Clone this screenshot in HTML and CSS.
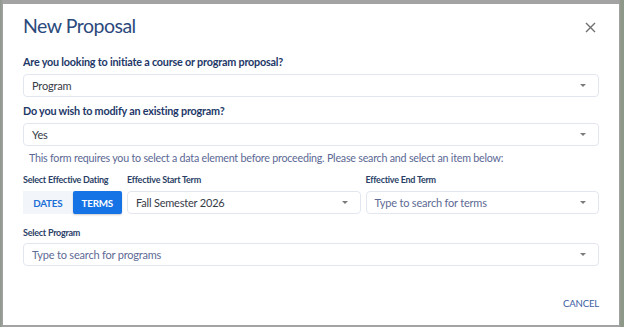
FILE: index.html
```html
<!DOCTYPE html>
<html lang="en">
<head>
    <meta charset="UTF-8">
    <meta name="viewport" content="width=device-width, initial-scale=1.0">
    <title>New Proposal</title>
    <link rel="stylesheet" href="styles.css">
</head>
<body>

    <div class="overlay">
        <div class="dialog">
            <div class="dialog-header">
                <h1>New Proposal</h1>
                <button class="close-btn" title="Close">
                    <svg width="11" height="11" viewBox="0 0 11 11">
                        <path d="M1 1L10 10M10 1L1 10" stroke="#6f6f6f" stroke-width="1.4" fill="none"/>
                    </svg>
                </button>
            </div>

            <label class="question">Are you looking to initiate a course or program proposal?</label>
            <div class="select">
                <span class="value">Program</span>
                <span class="arrow"></span>
            </div>

            <label class="question q-second">Do you wish to modify an existing program?</label>
            <div class="select">
                <span class="value">Yes</span>
                <span class="arrow"></span>
            </div>

            <p class="info">This form requires you to select a data element before proceeding. Please search and select an item below:</p>

            <div class="dating-row">
                <div class="field">
                    <label class="small-label">Select Effective Dating</label>
                    <div class="toggle">
                        <button class="toggle-btn">DATES</button>
                        <button class="toggle-btn active">TERMS</button>
                    </div>
                </div>
                <div class="field">
                    <label class="small-label">Effective Start Term</label>
                    <div class="select">
                        <span class="value">Fall Semester 2026</span>
                        <span class="arrow"></span>
                    </div>
                </div>
                <div class="field">
                    <label class="small-label">Effective End Term</label>
                    <div class="select">
                        <span class="value placeholder">Type to search for terms</span>
                        <span class="arrow"></span>
                    </div>
                </div>
            </div>

            <div class="field program-field">
                <label class="small-label">Select Program</label>
                <div class="select">
                    <span class="value placeholder">Type to search for programs</span>
                    <span class="arrow"></span>
                </div>
            </div>

            <div class="dialog-actions">
                <button class="text-btn">CANCEL</button>
            </div>
        </div>
    </div>

</body>
</html>
```

FILE: styles.css
```css
body {
    margin: 0;
    padding: 0;
    font-family: 'Lato', 'Liberation Sans', sans-serif;
    background-color: #9a9a9a;
}

.overlay {
    width: 624px;
    height: 327px;
    box-sizing: border-box;
    padding: 4px 5px 2px 3px;
    background: linear-gradient(to right, #8f978c 0px, #a3a3a3 3px, #a3a3a3 619px, #8d9889 621px);
}

.dialog {
    background: #ffffff;
    height: 321px;
    box-sizing: border-box;
    padding: 10px 20px 0 20px;
    display: flex;
    flex-direction: column;
}

.dialog-header {
    display: flex;
    justify-content: space-between;
    align-items: flex-start;
    height: 24px;
}

h1 {
    margin: 0;
    font-size: 19.5px;
    line-height: 24px;
    font-weight: 400;
    letter-spacing: -0.5px;
    color: #2b4a7c;
}

.close-btn {
    background: none;
    border: none;
    padding: 0;
    margin: 8px 3px 0 0;
    width: 11px;
    height: 11px;
    display: flex;
    cursor: pointer;
}

.question {
    display: block;
    margin-top: 17px;
    font-size: 10.8px;
    line-height: 14px;
    font-weight: 700;
    letter-spacing: -0.2px;
    color: #1e3868;
}

.q-second {
    margin-top: 7px;
}

.select {
    margin-top: 5px;
    height: 23px;
    box-sizing: border-box;
    border: 1px solid #e2e7ef;
    border-radius: 4px;
    display: flex;
    align-items: center;
    justify-content: space-between;
    padding: 0 12px 0 8px;
}

.value {
    font-size: 11px;
    letter-spacing: -0.2px;
    color: #363b47;
}

.placeholder {
    color: #5d6a94;
}

.arrow {
    width: 0;
    height: 0;
    border-left: 3.5px solid transparent;
    border-right: 3.5px solid transparent;
    border-top: 3.5px solid #7a7a7a;
}

.info {
    margin: 5px 0 0 6px;
    font-size: 10.7px;
    line-height: 14px;
    letter-spacing: -0.22px;
    color: #5b6894;
}

.dating-row {
    margin-top: 9px;
    display: grid;
    grid-template-columns: 99px 1fr 1fr;
    column-gap: 5px;
}

.small-label {
    display: block;
    font-size: 9px;
    line-height: 12px;
    font-weight: 700;
    color: #2b3f66;
    letter-spacing: -0.25px;
}

.field .select {
    margin-top: 5px;
}

.toggle {
    margin-top: 5px;
    display: flex;
    height: 23px;
}

.toggle-btn {
    flex: 1;
    border: none;
    background: #f2f6fb;
    color: #1c6fd6;
    font-family: inherit;
    font-size: 9.8px;
    font-weight: 700;
    letter-spacing: -0.2px;
    padding: 0;
    cursor: pointer;
}

.toggle-btn.active {
    background: #1673e6;
    color: #ffffff;
    border-radius: 2px;
    box-shadow: 0 1px 2px rgba(0, 0, 0, 0.2);
}

.program-field {
    margin-top: 13px;
}

.program-field .select {
    margin-top: 4px;
}

.dialog-actions {
    margin-top: auto;
    padding-bottom: 15px;
    display: flex;
    justify-content: flex-end;
}

.text-btn {
    background: none;
    border: none;
    padding: 0;
    font-family: inherit;
    font-size: 9.6px;
    line-height: 12px;
    letter-spacing: -0.2px;
    color: #3c5ea3;
    cursor: pointer;
}
```
